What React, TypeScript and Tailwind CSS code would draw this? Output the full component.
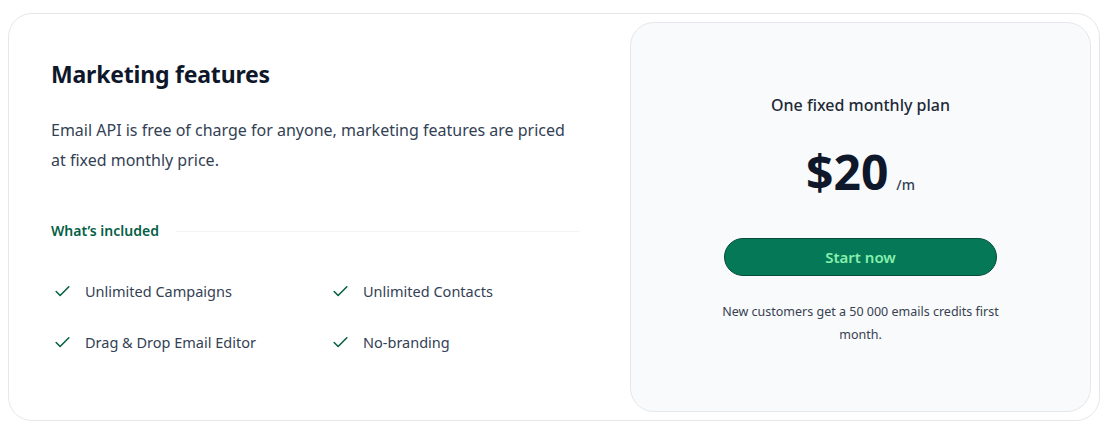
import React from "react";

function Check() {
  return (
    <svg width="19" height="19" viewBox="0 0 24 24" fill="none" stroke="#065f46" strokeWidth="2" strokeLinecap="round" strokeLinejoin="round" className="shrink-0">
      <path d="M20 6 9 17l-5-5" />
    </svg>
  );
}

const features = ["Unlimited Campaigns", "Unlimited Contacts", "Drag & Drop Email Editor", "No-branding"];

export default function App() {
  return (
    <div className="bg-white px-2 pt-[13px] pb-[5px]" style={{ fontFamily: '"Noto Sans", sans-serif' }}>
      <div className="flex h-[408px] rounded-[24px] border border-gray-200 p-2">
        <div className="flex-1 pl-[34px] pr-[50px] pt-[36px]">
          <h2 className="text-[23px] font-bold leading-8 tracking-[-0.2px] text-[#0f172a]">Marketing features</h2>
          <p className="mt-[25px] text-[16px] leading-[30px] text-[#334155]">
            Email API is free of charge for anyone, marketing features are priced at fixed monthly price.
          </p>
          <div className="mt-[44px] flex items-center gap-[17px]">
            <span className="text-[14px] font-semibold leading-6 text-[#065f46]">What’s included</span>
            <div className="h-px flex-1 bg-gray-100" />
          </div>
          <ul className="mt-[36px] grid grid-cols-[278px_1fr] gap-y-[27px]">
            {features.map((f) => (
              <li key={f} className="flex items-center gap-[13px] pl-[2px] text-[14.5px] leading-6 text-[#334155]">
                <Check />
                <span>{f}</span>
              </li>
            ))}
          </ul>
        </div>
        <div className="flex w-[461px] flex-col items-center rounded-[24px] border border-gray-200 bg-[#f9fafb] pt-[70px]">
          <p className="text-[16px] font-medium leading-6 text-[#1f2937]">One fixed monthly plan</p>
          <div className="mt-[25px] flex items-baseline">
            <span className="text-[48px] font-bold leading-[60px] text-[#0f172a]">$20</span>
            <span className="ml-2 text-[14px] font-medium text-[#334155]">/m</span>
          </div>
          <button className="mt-[36px] h-[38px] w-[273px] rounded-full border border-[#064e3b] bg-[#047857] text-[15px] font-semibold text-[#86efac]">
            Start now
          </button>
          <p className="mt-[24px] w-[300px] text-center text-[12.5px] leading-[23px] text-[#374151]">
            New customers get a 50 000 emails credits first month.
          </p>
        </div>
      </div>
    </div>
  );
}
